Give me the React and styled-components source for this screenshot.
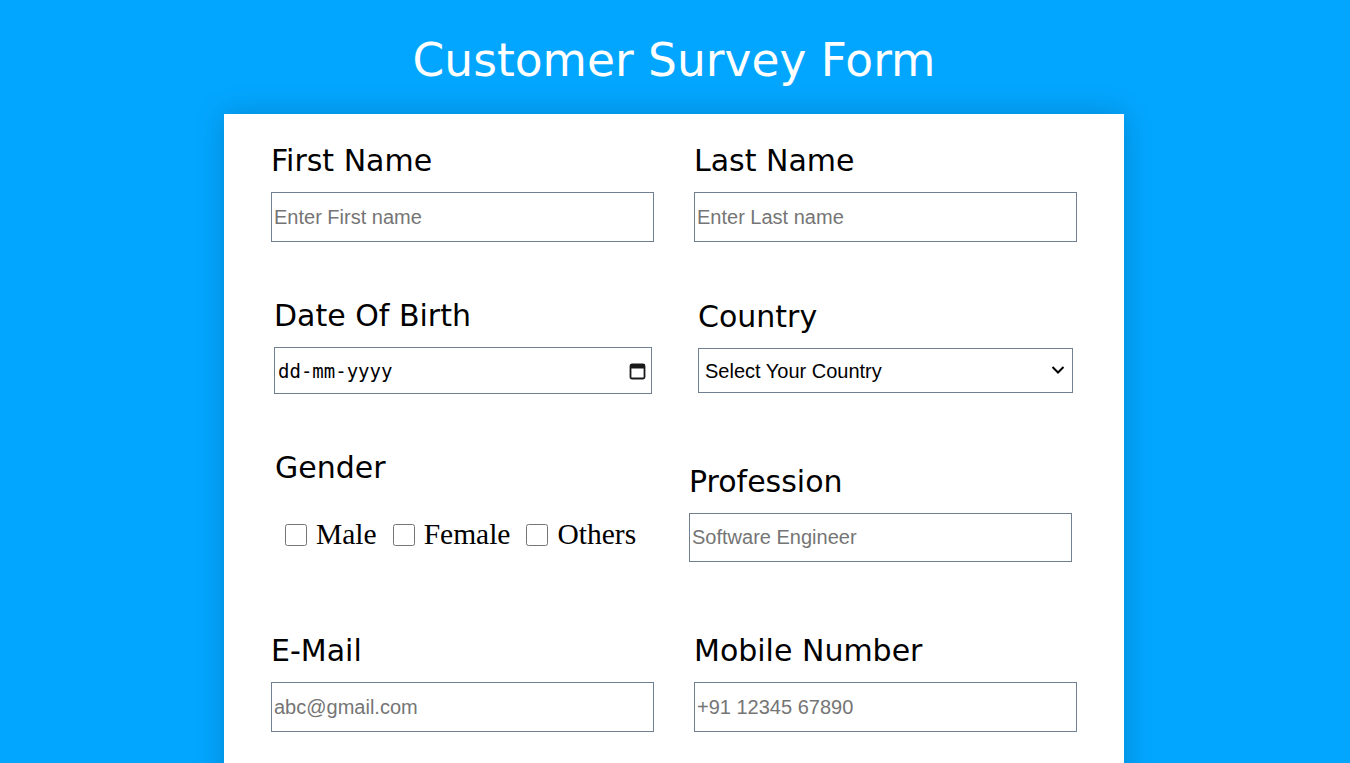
import React from 'react'
import styled, { createGlobalStyle } from 'styled-components'

const GlobalStyle = createGlobalStyle`
  html, body {
    margin: 0;
    padding: 0;
    background: #03a6ff;
  }
  body {
    font-family: "DejaVu Sans", Verdana, sans-serif;
  }
`

const Page = styled.div`
  min-height: 763px;
  padding-right: 2px;
  background: #03a6ff;
  overflow: hidden;
`

const Title = styled.h1`
  margin: 0;
  padding-top: 35px;
  height: 52px;
  line-height: 52px;
  text-align: center;
  color: #ffffff;
  font-family: "DejaVu Sans", Verdana, sans-serif;
  font-size: 45.5px;
  font-weight: normal;
`

const Card = styled.form`
  width: 900px;
  box-sizing: border-box;
  margin: 27px auto 0;
  padding: 29px 47px 60px;
  background: #ffffff;
  box-shadow: 0 0 28px rgba(0, 0, 0, 0.18);
`

const Row = styled.div`
  display: grid;
  grid-template-columns: 383px 383px;
  column-gap: 40px;
  align-items: start;
  margin-top: ${p => p.$top || 0}px;
`

const Field = styled.div`
  display: flex;
  flex-direction: column;
  align-items: flex-start;
  margin-left: ${p => p.$dx || 0}px;
  margin-top: ${p => p.$dy || 0}px;
`

const Label = styled.label`
  display: block;
  height: 35px;
  line-height: 35px;
  font-family: "DejaVu Sans", Verdana, sans-serif;
  font-size: 30px;
  color: #000000;
  margin-bottom: 14px;
`

const TextInput = styled.input`
  box-sizing: border-box;
  width: ${p => p.$w || 383}px;
  height: ${p => p.$h || 50}px;
  margin: 0;
  padding: 1px 2px;
  border: 1px solid #708090;
  border-radius: 0;
  background: #ffffff;
  font-family: "Liberation Sans", Arial, sans-serif;
  font-size: 20px;
  color: #000000;
  outline: none;

  &::placeholder {
    color: #757575;
  }
`

// date box: text field plus calendar glyph, like the native picker
const DateBox = styled.div`
  box-sizing: border-box;
  display: flex;
  align-items: center;
  width: 378px;
  height: 47px;
  padding: 0 5px 0 3px;
  border: 1px solid #708090;
  background: #ffffff;
`

const DateText = styled.input`
  flex: 1;
  min-width: 0;
  border: none;
  outline: none;
  padding: 0;
  margin: 0;
  background: transparent;
  font-family: "DejaVu Sans Mono", "Liberation Mono", monospace;
  font-size: 19px;
  color: #000000;

  &::placeholder {
    color: #000000;
  }
`

const SelectWrap = styled.div`
  position: relative;
  width: 375px;
  height: 45px;
`

const Select = styled.select`
  box-sizing: border-box;
  width: 100%;
  height: 100%;
  margin: 0;
  padding: 0 30px 0 6px;
  border: 1px solid #708090;
  border-radius: 0;
  background: #ffffff;
  appearance: none;
  font-family: "Liberation Sans", Arial, sans-serif;
  font-size: 20px;
  color: #000000;
  outline: none;
`

const Chevron = styled.svg`
  position: absolute;
  right: 8px;
  top: 17px;
  pointer-events: none;
`

const GenderGroup = styled.div`
  display: flex;
  align-items: center;
  height: 33px;
  margin-top: 19px;
  margin-left: 10px;
  margin-bottom: 11px;
`

const Option = styled.label`
  display: flex;
  align-items: center;
  margin-right: 16px;
  font-family: "Liberation Serif", "Times New Roman", serif;
  font-size: 29.5px;
  color: #000000;
`

const Check = styled.input`
  width: 22px;
  height: 22px;
  margin: 0 9px 0 0;
`

function CalendarIcon() {
  return (
    <svg width="17" height="18" viewBox="0 0 17 18">
      <rect x="1.5" y="2.5" width="14" height="14" rx="1.5" fill="none" stroke="#1a1a1a" strokeWidth="1.8" />
      <rect x="1.5" y="2.5" width="14" height="4" fill="#1a1a1a" />
    </svg>
  )
}

export default function App() {
  return (
    <Page>
      <GlobalStyle />
      <Title>Customer Survey Form</Title>
      <Card onSubmit={e => e.preventDefault()}>
        <Row>
          <Field>
            <Label>First Name</Label>
            <TextInput type="text" placeholder="Enter First name" />
          </Field>
          <Field>
            <Label>Last Name</Label>
            <TextInput type="text" placeholder="Enter Last name" />
          </Field>
        </Row>

        <Row $top={56}>
          <Field $dx={3}>
            <Label>Date Of Birth</Label>
            <DateBox>
              <DateText type="text" placeholder="dd-mm-yyyy" />
              <CalendarIcon />
            </DateBox>
          </Field>
          <Field $dx={4} $dy={1}>
            <Label>Country</Label>
            <SelectWrap>
              <Select defaultValue="">
                <option value="">Select Your Country</option>
                <option value="in">India</option>
                <option value="us">United States</option>
                <option value="uk">United Kingdom</option>
              </Select>
              <Chevron width="14" height="10" viewBox="0 0 14 10">
                <path d="M1.5 2 L7 7.5 L12.5 2" fill="none" stroke="#000" strokeWidth="2" />
              </Chevron>
            </SelectWrap>
          </Field>
        </Row>

        <Row $top={56}>
          <Field $dx={4}>
            <Label>Gender</Label>
            <GenderGroup>
              <Option><Check type="checkbox" />Male</Option>
              <Option><Check type="checkbox" />Female</Option>
              <Option><Check type="checkbox" />Others</Option>
            </GenderGroup>
          </Field>
          <Field $dx={-5} $dy={14}>
            <Label>Profession</Label>
            <TextInput type="text" placeholder="Software Engineer" $h={49} />
          </Field>
        </Row>

        <Row $top={71}>
          <Field>
            <Label>E-Mail</Label>
            <TextInput type="email" placeholder="abc@gmail.com" />
          </Field>
          <Field>
            <Label>Mobile Number</Label>
            <TextInput type="tel" placeholder="+91 12345 67890" />
          </Field>
        </Row>
      </Card>
    </Page>
  )
}
